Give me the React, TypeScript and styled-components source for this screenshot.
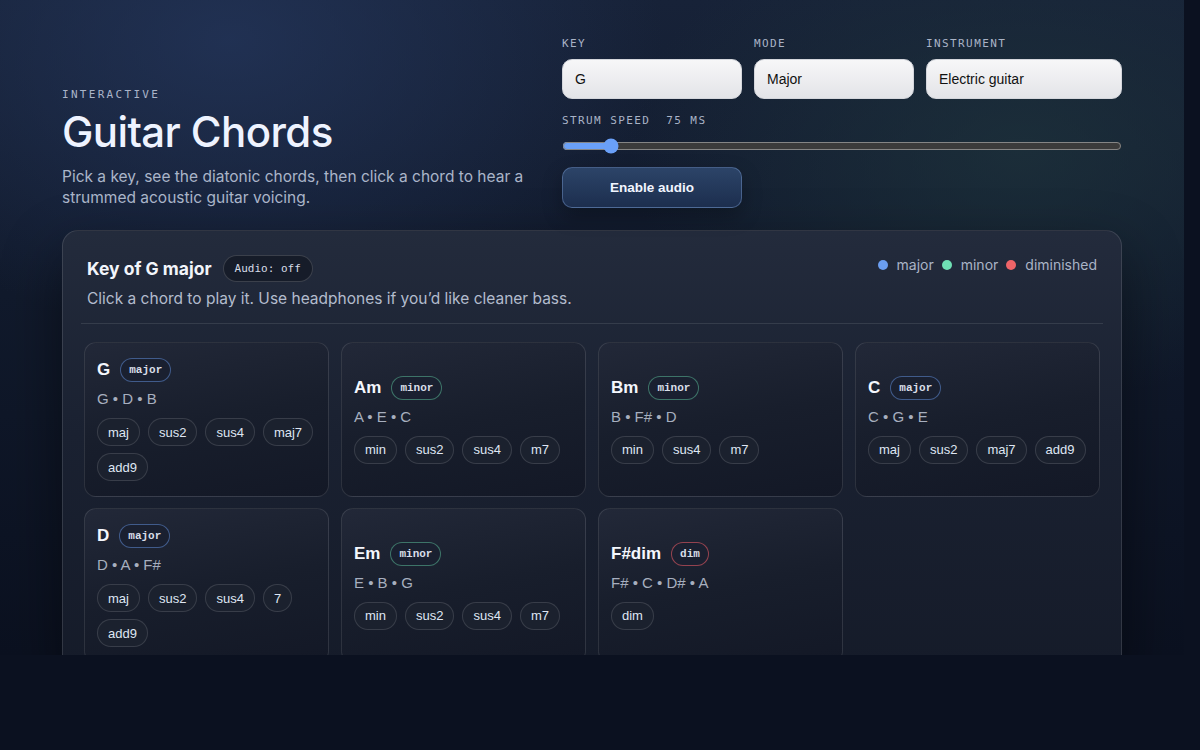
import React from "react";
import styled, { createGlobalStyle } from "styled-components";

const GlobalStyle = createGlobalStyle`
  html, body {
    margin: 0;
    padding: 0;
    background: #0b1120;
  }
  * {
    box-sizing: border-box;
  }
`;

const Page = styled.div`
  width: 1184px;
  height: 655px;
  overflow: hidden;
  padding: 37px 62px 0;
  font-family: "Inter", "Liberation Sans", sans-serif;
  color: #e8eefb;
  background:
    radial-gradient(ellipse 620px 420px at 230px 40px, rgba(36, 54, 92, 0.75), transparent 70%),
    radial-gradient(ellipse 560px 360px at 1020px 150px, rgba(30, 52, 60, 0.7), transparent 70%),
    linear-gradient(180deg, #172238 0%, #111a2c 45%, #0b1120 100%);
`;

const Header = styled.header`
  display: flex;
  align-items: flex-end;
  justify-content: space-between;
  gap: 22px;
`;

const Intro = styled.div`
  flex: 1;
`;

const Eyebrow = styled.div`
  font-family: "DejaVu Sans Mono", monospace;
  font-size: 11px;
  letter-spacing: 2.3px;
  color: #aab4c8;
  margin-bottom: 7px;
`;

const Title = styled.h1`
  margin: 0;
  font-size: 42px;
  font-weight: 500;
  letter-spacing: -0.6px;
  color: #eef3ff;
  line-height: 1.15;
`;

const Lead = styled.p`
  margin: 11px 0 0;
  font-size: 15.5px;
  line-height: 20.5px;
  color: #aab5c9;
  max-width: 480px;
`;

const Controls = styled.div`
  width: 560px;
  display: flex;
  flex-direction: column;
`;

const FieldRow = styled.div`
  display: grid;
  grid-template-columns: 180px 160px 196px;
  gap: 12px;
`;

const Field = styled.label`
  display: flex;
  flex-direction: column;
  gap: 9px;
`;

const Label = styled.span`
  font-family: "DejaVu Sans Mono", monospace;
  font-size: 11px;
  letter-spacing: 1.4px;
  color: #a9b3c6;
  text-transform: uppercase;
  white-space: pre;
`;

const Select = styled.select`
  appearance: none;
  height: 40px;
  border-radius: 10px;
  border: 1px solid #d4d6dc;
  padding: 0 12px;
  font-family: "Liberation Sans", Arial, sans-serif;
  font-size: 14px;
  color: #111;
  background: linear-gradient(180deg, #f7f7f8 0%, #e3e4e8 100%);
  outline: none;
`;

const SpeedBlock = styled.div`
  display: flex;
  flex-direction: column;
  gap: 9px;
  margin-top: 15px;
`;

const Range = styled.input`
  width: 100%;
  margin: 0;
  height: 20px;
  accent-color: #6aa0f8;
  color-scheme: dark;
`;

const AudioButton = styled.button`
  margin-top: 11px;
  width: 180px;
  height: 41px;
  border-radius: 10px;
  border: 1px solid rgba(130, 165, 220, 0.4);
  background: linear-gradient(180deg, #2c4468 0%, #1c2e4e 100%);
  color: #f1f5ff;
  font-family: "Liberation Sans", Arial, sans-serif;
  font-weight: 700;
  font-size: 13.5px;
  box-shadow: 0 8px 20px rgba(0, 0, 0, 0.25);
  cursor: pointer;
`;

const Panel = styled.section`
  margin-top: 22px;
  border-radius: 16px;
  border: 1px solid rgba(255, 255, 255, 0.12);
  background: linear-gradient(180deg, #232b3c 0%, #1a2131 45%, #151b29 100%);
  box-shadow: 0 24px 60px rgba(0, 0, 0, 0.45);
  padding: 0 18px;
`;

const PanelHead = styled.div`
  display: flex;
  justify-content: space-between;
  align-items: flex-start;
  padding: 24px 6px 15px;
  border-bottom: 1px solid rgba(255, 255, 255, 0.1);
`;

const HeadText = styled.div`
  display: flex;
  flex-direction: column;
  gap: 7px;
`;

const HeadTitleRow = styled.div`
  display: flex;
  align-items: center;
  gap: 11px;
`;

const PanelTitle = styled.h2`
  margin: 0;
  font-size: 17.5px;
  font-weight: 650;
  color: #f2f5fb;
`;

const StatusPill = styled.span`
  font-family: "DejaVu Sans Mono", monospace;
  font-size: 11px;
  color: #d6dce8;
  padding: 6px 11px;
  border-radius: 999px;
  border: 1px solid rgba(255, 255, 255, 0.16);
  background: #161c29;
`;

const PanelHint = styled.p`
  margin: 0;
  font-size: 15.5px;
  color: #b3bccd;
`;

const Legend = styled.div`
  display: flex;
  align-items: center;
  gap: 8px;
  margin-top: 1px;
  font-size: 14px;
  color: #aab4c6;
`;

const LegendItem = styled.span`
  display: inline-flex;
  align-items: center;
  gap: 9px;
`;

const Dot = styled.span<{ $color: string }>`
  width: 10px;
  height: 10px;
  border-radius: 50%;
  background: ${(p) => p.$color};
`;

const Grid = styled.div`
  display: grid;
  grid-template-columns: repeat(4, 1fr);
  gap: 11px 12px;
  padding: 18px 3px;
`;

const Card = styled.div`
  min-height: 155px;
  border-radius: 12px;
  border: 1px solid rgba(255, 255, 255, 0.11);
  background: linear-gradient(170deg, #222838 0%, #181e2c 50%, #131826 100%);
  padding: 13px 12px;
  display: flex;
  flex-direction: column;
  justify-content: center;
  cursor: pointer;
`;

const ChordHead = styled.div`
  display: flex;
  align-items: center;
  gap: 10px;
`;

const ChordName = styled.span`
  font-family: "Liberation Sans", Arial, sans-serif;
  font-weight: 700;
  font-size: 17px;
  color: #f4f7fd;
`;

const badgeColors: Record<string, string> = {
  major: "rgba(96, 140, 215, 0.55)",
  minor: "rgba(96, 200, 160, 0.5)",
  dim: "rgba(230, 90, 100, 0.6)",
};

const Badge = styled.span<{ $kind: string }>`
  font-family: "Liberation Mono", monospace;
  font-weight: 700;
  font-size: 11px;
  color: #d9dee8;
  padding: 5px 8px;
  border-radius: 999px;
  border: 1px solid ${(p) => badgeColors[p.$kind]};
  background: #1a2030;
`;

const Notes = styled.div`
  margin-top: 8px;
  font-family: "Liberation Sans", Arial, sans-serif;
  font-size: 15px;
  color: #a7afbf;
`;

const Voicings = styled.div`
  margin-top: 11px;
  display: flex;
  flex-wrap: wrap;
  gap: 7px 8px;
`;

const Voicing = styled.button`
  height: 28px;
  padding: 0 10px;
  border-radius: 999px;
  border: 1px solid rgba(255, 255, 255, 0.13);
  background: #1b212e;
  color: #dfe6f3;
  font-family: "Liberation Sans", Arial, sans-serif;
  font-size: 13px;
  cursor: pointer;
`;

type Chord = {
  name: string;
  kind: "major" | "minor" | "dim";
  notes: string[];
  voicings: string[];
};

const chords: Chord[] = [
  { name: "G", kind: "major", notes: ["G", "D", "B"], voicings: ["maj", "sus2", "sus4", "maj7", "add9"] },
  { name: "Am", kind: "minor", notes: ["A", "E", "C"], voicings: ["min", "sus2", "sus4", "m7"] },
  { name: "Bm", kind: "minor", notes: ["B", "F#", "D"], voicings: ["min", "sus4", "m7"] },
  { name: "C", kind: "major", notes: ["C", "G", "E"], voicings: ["maj", "sus2", "maj7", "add9"] },
  { name: "D", kind: "major", notes: ["D", "A", "F#"], voicings: ["maj", "sus2", "sus4", "7", "add9"] },
  { name: "Em", kind: "minor", notes: ["E", "B", "G"], voicings: ["min", "sus2", "sus4", "m7"] },
  { name: "F#dim", kind: "dim", notes: ["F#", "C", "D#", "A"], voicings: ["dim"] },
];

const App: React.FC = () => {
  return (
    <>
      <GlobalStyle />
      <Page>
        <Header>
          <Intro>
            <Eyebrow>INTERACTIVE</Eyebrow>
            <Title>Guitar Chords</Title>
            <Lead>
              Pick a key, see the diatonic chords, then click a chord to hear a strummed acoustic guitar
              voicing.
            </Lead>
          </Intro>

          <Controls>
            <FieldRow>
              <Field>
                <Label>Key</Label>
                <Select defaultValue="G">
                  <option>G</option>
                </Select>
              </Field>
              <Field>
                <Label>Mode</Label>
                <Select defaultValue="Major">
                  <option>Major</option>
                </Select>
              </Field>
              <Field>
                <Label>Instrument</Label>
                <Select defaultValue="Electric guitar">
                  <option>Electric guitar</option>
                </Select>
              </Field>
            </FieldRow>
            <SpeedBlock>
              <Label>{"Strum speed  75 ms"}</Label>
              <Range type="range" min={40} max={500} defaultValue={75} />
            </SpeedBlock>
            <AudioButton>Enable audio</AudioButton>
          </Controls>
        </Header>

        <Panel>
          <PanelHead>
            <HeadText>
              <HeadTitleRow>
                <PanelTitle>Key of G major</PanelTitle>
                <StatusPill>Audio: off</StatusPill>
              </HeadTitleRow>
              <PanelHint>Click a chord to play it. Use headphones if you’d like cleaner bass.</PanelHint>
            </HeadText>
            <Legend>
              <LegendItem>
                <Dot $color="#6b9ef0" />
                major
              </LegendItem>
              <LegendItem>
                <Dot $color="#6fe0b4" />
                minor
              </LegendItem>
              <LegendItem>
                <Dot $color="#ee6468" />
                diminished
              </LegendItem>
            </Legend>
          </PanelHead>

          <Grid>
            {chords.map((c) => (
              <Card key={c.name}>
                <ChordHead>
                  <ChordName>{c.name}</ChordName>
                  <Badge $kind={c.kind}>{c.kind}</Badge>
                </ChordHead>
                <Notes>{c.notes.join(" • ")}</Notes>
                <Voicings>
                  {c.voicings.map((v) => (
                    <Voicing key={v}>{v}</Voicing>
                  ))}
                </Voicings>
              </Card>
            ))}
          </Grid>
        </Panel>
      </Page>
    </>
  );
};

export default App;
